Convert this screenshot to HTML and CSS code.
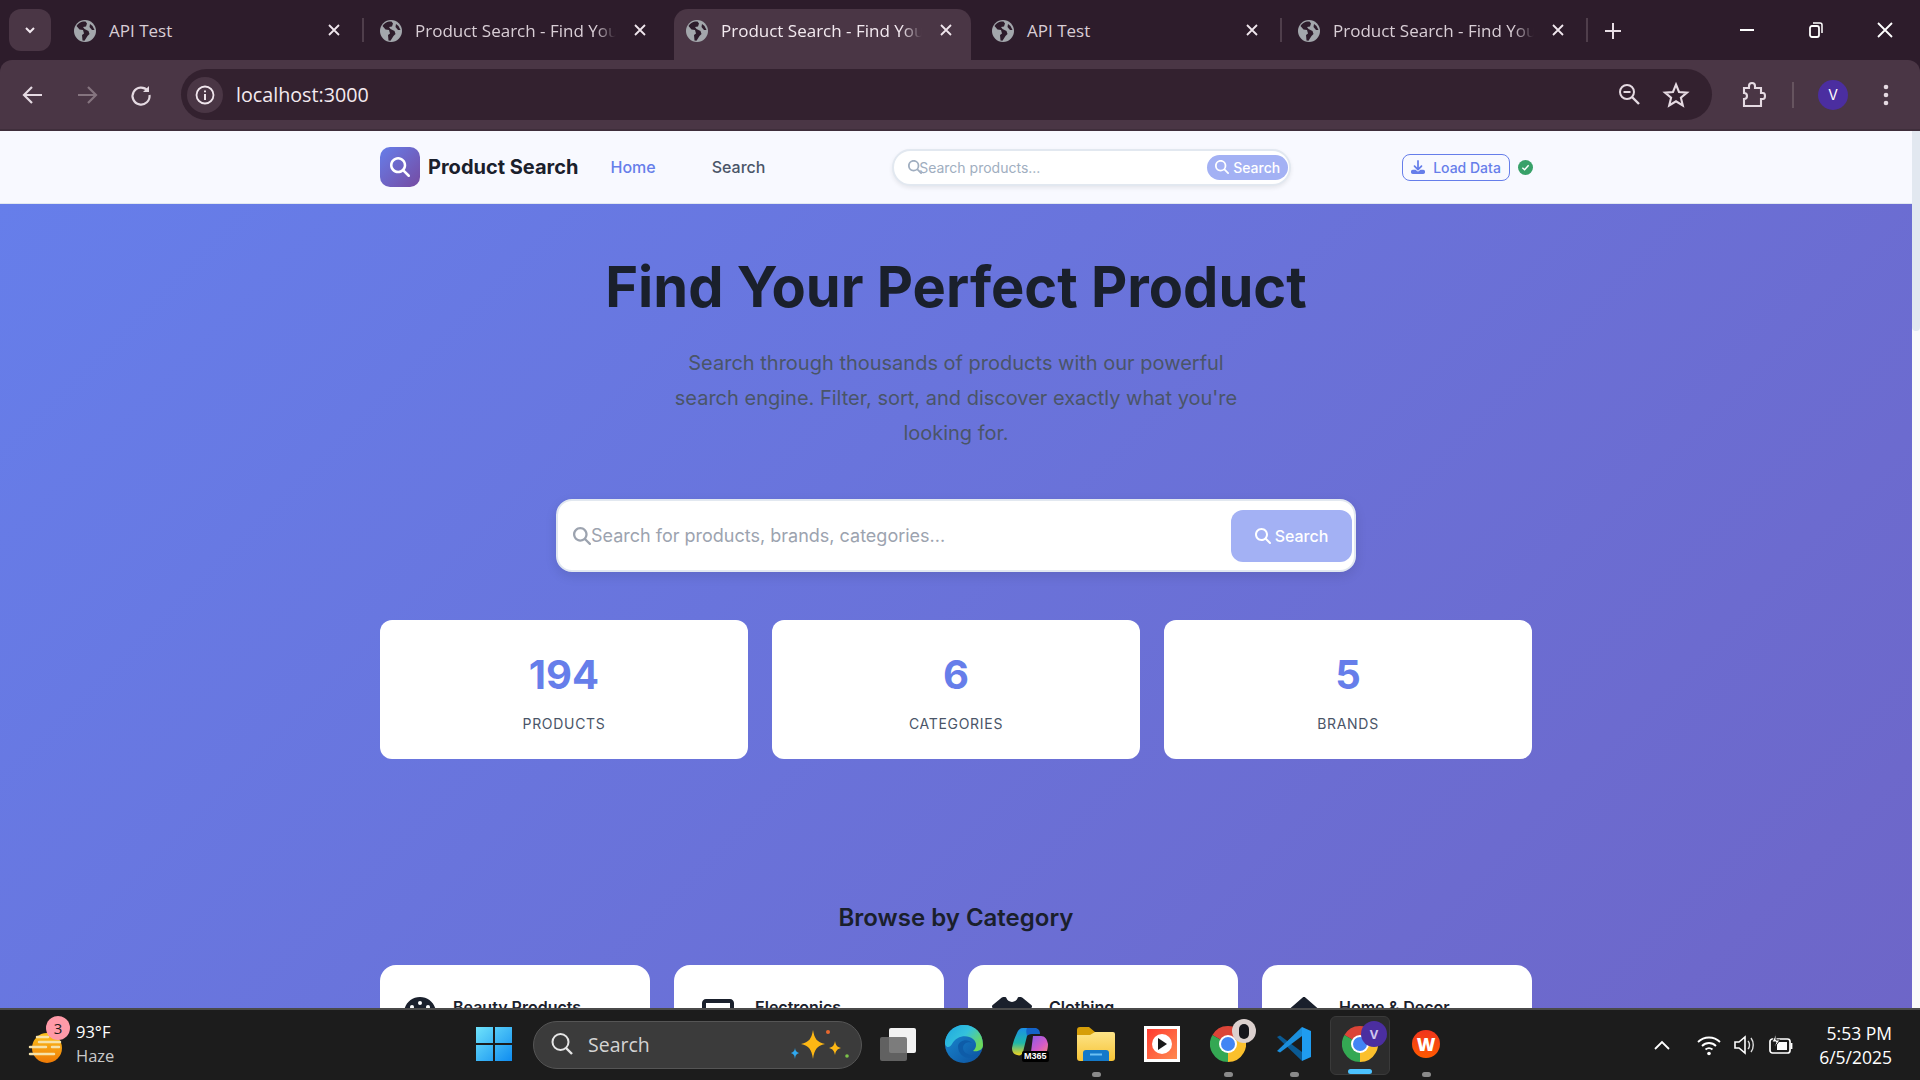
FILE: index.html
```html
<!DOCTYPE html>
<html lang="en">
<head>
<meta charset="UTF-8">
<meta name="viewport" content="width=device-width, initial-scale=1.0">
<title>Product Search - Find Your Perfect Product</title>
<link rel="stylesheet" href="styles.css">
</head>
<body>

<svg class="sprites" width="0" height="0" aria-hidden="true">
    <symbol id="i-search" viewBox="0 0 512 512"><path fill="currentColor" d="M416 208c0 45.9-14.9 88.3-40 122.7L502.6 457.4c12.5 12.5 12.5 32.8 0 45.3s-32.8 12.5-45.3 0L330.7 376c-34.4 25.2-76.8 40-122.7 40C93.1 416 0 322.9 0 208S93.1 0 208 0S416 93.1 416 208zM208 352a144 144 0 1 0 0-288 144 144 0 1 0 0 288z"/></symbol>
    <symbol id="i-download" viewBox="0 0 512 512"><path fill="currentColor" d="M288 32c0-17.7-14.3-32-32-32s-32 14.3-32 32V274.7l-73.4-73.4c-12.5-12.5-32.8-12.5-45.3 0s-12.5 32.8 0 45.3l128 128c12.5 12.5 32.8 12.5 45.3 0l128-128c12.5-12.5 12.5-32.8 0-45.3s-32.8-12.5-45.3 0L288 274.7V32zM64 352c-35.3 0-64 28.7-64 64v32c0 35.3 28.7 64 64 64H448c35.3 0 64-28.7 64-64V416c0-35.3-28.7-64-64-64H346.5l-45.3 45.3c-25 25-65.5 25-90.5 0L165.5 352H64z"/></symbol>
    <symbol id="i-globe" viewBox="0 0 22 22"><circle cx="11" cy="11" r="11" fill="#a3a7ac"/><path fill="#2d1c2b" d="M9 1.500 C6.500 2 4 3.500 2.500 6 L5.500 9.500 L9 10 L10 13.500 L8 15 L8.500 20.500 L10.500 20.800 L13.500 16 L15.500 14 L14.500 11 L10.500 9 L9 7 L12 6.500 L13 3.500 L11.500 1.500Z"/><path fill="#2d1c2b" d="M16 4 L18.500 6 L20.500 10 L18 10 L15.500 7Z"/></symbol>
    <symbol id="i-x" viewBox="0 0 14 14"><path d="M2 2 L12 12 M12 2 L2 12" stroke="currentColor" stroke-width="1.800" fill="none"/></symbol>
    <symbol id="i-chrome" viewBox="0 0 36 36"><path fill="#db4437" d="M18 18 L2.410 9 A18 18 0 0 1 33.590 9Z"/><path fill="#fbc02d" d="M18 18 L33.590 9 A18 18 0 0 1 18 36Z"/><path fill="#34a853" d="M18 18 L18 36 A18 18 0 0 1 2.410 9Z"/><circle cx="18" cy="18" r="9" fill="#fff"/><circle cx="18" cy="18" r="7" fill="#4285f4"/></symbol>
</svg>

<div class="tabstrip">
    <button class="tab-search" aria-label="Search tabs"><svg width="14" height="14" viewBox="0 0 14 14"><path d="M3 5 L7 9 L11 5" stroke="#f3e9f0" stroke-width="2" fill="none"/></svg></button>
    <div class="tab sep"><svg class="favicon"><use href="#i-globe"/></svg><span class="tab-title">API Test</span><svg class="tab-close"><use href="#i-x"/></svg></div>
    <div class="tab"><svg class="favicon"><use href="#i-globe"/></svg><span class="tab-title fade">Product Search - Find You</span><svg class="tab-close"><use href="#i-x"/></svg></div>
    <div class="tab active"><svg class="favicon"><use href="#i-globe"/></svg><span class="tab-title fade">Product Search - Find You</span><svg class="tab-close"><use href="#i-x"/></svg></div>
    <div class="tab sep"><svg class="favicon"><use href="#i-globe"/></svg><span class="tab-title">API Test</span><svg class="tab-close"><use href="#i-x"/></svg></div>
    <div class="tab sep"><svg class="favicon"><use href="#i-globe"/></svg><span class="tab-title fade">Product Search - Find You</span><svg class="tab-close"><use href="#i-x"/></svg></div>
    <svg class="new-tab" width="20" height="20" viewBox="0 0 20 20"><path d="M10 2 V18 M2 10 H18" stroke="#e8dde5" stroke-width="2"/></svg>
    <div class="window-controls">
        <svg width="16" height="16" viewBox="0 0 16 16"><path d="M1 8 H15" stroke="#fff" stroke-width="2"/></svg>
        <svg width="16" height="18" viewBox="0 0 16 18"><rect x="2" y="5" width="9" height="11" rx="2" stroke="#fff" stroke-width="1.800" fill="none"/><path d="M5 2 H12 Q14 2 14 4 V12" stroke="#fff" stroke-width="1.500" fill="none"/></svg>
        <svg width="18" height="18" viewBox="0 0 18 18"><path d="M2 2 L16 16 M16 2 L2 16" stroke="#fff" stroke-width="1.800"/></svg>
    </div>
</div>

<div class="toolbar">
    <svg class="tool" viewBox="0 0 36 36"><path d="M27 18 H9 M17 10 L9 18 L17 26" stroke="#e5dae2" stroke-width="2.200" fill="none"/></svg>
    <svg class="tool" viewBox="0 0 36 36"><path d="M9 18 H27 M19 10 L27 18 L19 26" stroke="#85747f" stroke-width="2.200" fill="none"/></svg>
    <svg class="tool" viewBox="0 0 36 36"><path d="M24.500 13.500 A8.500 8.500 0 1 0 26.500 18" stroke="#e5dae2" stroke-width="2.200" fill="none"/><path d="M26 9 V15 H20Z" fill="#e5dae2"/></svg>
    <div class="address">
        <span class="info-chip"><svg width="22" height="22" viewBox="0 0 22 22"><circle cx="11" cy="11" r="8.500" stroke="#f0e6ed" stroke-width="1.800" fill="none"/><path d="M11 10 V16 M11 6.500 V8.300" stroke="#f0e6ed" stroke-width="2"/></svg></span>
        <span class="url">localhost:3000</span>
        <svg class="tool" viewBox="0 0 36 36"><circle cx="16" cy="15" r="7" stroke="#e5dae2" stroke-width="2" fill="none"/><path d="M21 20 L28 27" stroke="#e5dae2" stroke-width="2.400"/><path d="M12.500 15 H19.500" stroke="#e5dae2" stroke-width="2"/></svg>
        <svg class="tool" viewBox="0 0 36 36"><path d="M18 7.500 L21 15 L29 15.600 L22.900 20.700 L24.800 28.500 L18 24.300 L11.200 28.500 L13.100 20.700 L7 15.600 L15 15Z" stroke="#e5dae2" stroke-width="2.100" fill="none"/></svg>
    </div>
    <svg class="tool" viewBox="0 0 36 36"><path d="M9 11 H14 V9 Q14 6 17 6 Q20 6 20 9 V11 H26 V16 H28 Q30 16 30 19 Q30 22 28 22 H26 V29 H9 V22 Q12 22 12 19 Q12 16 9 16Z" stroke="#e5dae2" stroke-width="2.100" fill="none"/></svg>
    <span class="tool-divider"></span>
    <span class="avatar">V</span>
    <svg class="tool tool-menu" viewBox="0 0 36 36"><circle cx="18" cy="10" r="2.300" fill="#e5dae2"/><circle cx="18" cy="18" r="2.300" fill="#e5dae2"/><circle cx="18" cy="26" r="2.300" fill="#e5dae2"/></svg>
</div>

<div class="viewport">
    <div class="page">
        <header class="site-header">
            <div class="brand-group">
                <span class="logo"><svg width="20" height="20"><use href="#i-search"/></svg></span>
                <span class="brand">Product Search</span>
                <nav class="nav">
                    <a class="nav-link current">Home</a>
                    <a class="nav-link">Search</a>
                </nav>
            </div>
            <form class="header-search">
                <svg class="header-search-icon" width="14" height="14"><use href="#i-search"/></svg>
                <input type="text" placeholder="Search products...">
                <button type="button" class="header-search-btn"><svg width="14" height="14"><use href="#i-search"/></svg>Search</button>
            </form>
            <div class="actions">
                <button class="load-btn"><svg width="14" height="14"><use href="#i-download"/></svg>Load Data</button>
                <span class="status-dot"><svg width="9" height="9" viewBox="0 0 10 10"><path d="M1.500 5.200 L4 7.500 L8.500 2.500" stroke="#fff" stroke-width="1.600" fill="none"/></svg></span>
            </div>
        </header>

        <main class="hero">
            <h1>Find Your Perfect Product</h1>
            <p class="lead">Search through thousands of products with our powerful search engine. Filter, sort, and discover exactly what you're looking for.</p>

            <form class="hero-search">
                <svg class="hero-search-icon" width="18" height="18"><use href="#i-search"/></svg>
                <input type="text" placeholder="Search for products, brands, categories...">
                <button type="button" class="hero-search-btn"><svg width="16" height="16"><use href="#i-search"/></svg>Search</button>
            </form>

            <section class="stats">
                <div class="stat"><div class="stat-num">194</div><div class="stat-label">Products</div></div>
                <div class="stat"><div class="stat-num">6</div><div class="stat-label">Categories</div></div>
                <div class="stat"><div class="stat-num">5</div><div class="stat-label">Brands</div></div>
            </section>

            <h2>Browse by Category</h2>
            <section class="categories">
                <div class="category">
                    <svg class="cat-icon" width="32" height="32" viewBox="0 0 512 512"><path d="M512 256c0 .9 0 1.800 0 2.700c-.4 36.500-33.600 61.300-70.100 61.300H344c-26.500 0-48 21.500-48 48c0 3.400 .4 6.700 1 9.900c2.100 10.200 6.500 20 10.800 29.900c6.100 13.800 12.100 27.500 12.100 42c0 31.800-21.600 60.700-53.400 62c-3.500 .1-7 .2-10.600 .2C114.600 512 0 397.400 0 256S114.600 0 256 0S512 114.600 512 256zM128 288a32 32 0 1 0 -64 0 32 32 0 1 0 64 0zm0-96a32 32 0 1 0 0-64 32 32 0 1 0 0 64zM288 96a32 32 0 1 0 -64 0 32 32 0 1 0 64 0zm96 96a32 32 0 1 0 0-64 32 32 0 1 0 0 64z"/></svg>
                    <span class="cat-name">Beauty Products</span>
                </div>
                <div class="category">
                    <svg class="cat-icon" width="40" height="32" viewBox="0 0 640 512"><path d="M128 32C92.700 32 64 60.700 64 96V352h64V96H512V352h64V96c0-35.300-28.700-64-64-64H128zM19.200 384C8.600 384 0 392.600 0 403.200C0 445.600 34.400 480 76.800 480H563.200c42.400 0 76.800-34.400 76.800-76.800c0-10.600-8.600-19.200-19.200-19.200H19.200z"/></svg>
                    <span class="cat-name">Electronics</span>
                </div>
                <div class="category">
                    <svg class="cat-icon" width="40" height="32" viewBox="0 0 640 512"><path d="M211.800 0c7.800 0 14.300 5.700 16.700 13.200C240.800 51.900 277.100 80 320 80s79.200-28.100 91.500-66.800C413.900 5.700 420.400 0 428.200 0h12.600c22.500 0 44.200 7.900 61.500 22.300L628.500 127.400c6.600 5.500 10.700 13.500 11.400 22.100s-2.100 17.100-7.800 23.600l-56 64c-11.400 13.100-31.200 14.600-44.600 3.500L480 197.700V448c0 35.300-28.700 64-64 64H224c-35.300 0-64-28.700-64-64V197.700l-51.500 42.900c-13.300 11.100-33.100 9.600-44.600-3.500l-56-64c-5.700-6.500-8.500-15-7.800-23.600s4.800-16.600 11.400-22.100L137.700 22.300C155 7.900 176.700 0 199.200 0h12.600z"/></svg>
                    <span class="cat-name">Clothing</span>
                </div>
                <div class="category">
                    <svg class="cat-icon" width="36" height="32" viewBox="0 0 576 512"><path d="M575.800 255.500c0 18-15 32.100-32 32.100h-32l.7 160.200c0 2.700-.2 5.400-.5 8.100V472c0 22.100-17.900 40-40 40H456c-1.100 0-2.200 0-3.300-.1c-1.400 .1-2.800 .1-4.200 .1H416 392c-22.100 0-40-17.900-40-40V448 384c0-17.700-14.300-32-32-32H256c-17.700 0-32 14.300-32 32v64 24c0 22.100-17.900 40-40 40H160 128.100c-1.500 0-3-.1-4.500-.2c-1.200 .1-2.400 .2-3.600 .2H104c-22.100 0-40-17.900-40-40V360c0-.9 0-1.900 .1-2.800V287.600H32c-18 0-32-14-32-32.100c0-9 3-17 10-24L266.400 8c7-7 15-8 22-8s15 2 21 7L564.800 231.500c8 7 12 15 11 24z"/></svg>
                    <span class="cat-name">Home &amp; Decor</span>
                </div>
            </section>
        </main>
    </div>
    <div class="scrollbar"><div class="scroll-thumb"></div></div>
</div>

<footer class="taskbar">
    <div class="weather">
        <span class="weather-icon">
            <svg width="38" height="36" viewBox="0 0 38 36">
                <defs><linearGradient id="sunGrad" x1="0" y1="0" x2="0" y2="1"><stop offset="0" stop-color="#fcc21b"/><stop offset="1" stop-color="#ef7a06"/></linearGradient></defs>
                <circle cx="19" cy="18" r="15" fill="url(#sunGrad)"/>
                <path d="M9 7 H20 M11 12 H32 M2 17 H18 M24 17 H31 M2 24 H26" stroke="#f6e2a8" stroke-width="2.500" stroke-linecap="round"/>
            </svg>
            <span class="badge">3</span>
        </span>
        <div class="weather-text"><div>93°F</div><div class="muted">Haze</div></div>
    </div>

    <div class="slot">
        <svg width="36" height="36" viewBox="0 0 36 36">
            <defs><linearGradient id="winGrad" x1="0" y1="0" x2="1" y2="1"><stop offset="0" stop-color="#6fe3fb"/><stop offset="1" stop-color="#0f8cf0"/></linearGradient></defs>
            <path fill="url(#winGrad)" d="M0 1 H17 V17 H0Z M19 1 H36 V17 H19Z M0 19 H17 V35 H0Z M19 19 H36 V35 H19Z"/>
        </svg>
    </div>

    <div class="task-search">
        <svg width="24" height="24" viewBox="0 0 24 24"><circle cx="10.500" cy="10" r="8" stroke="#e6e6e6" stroke-width="2" fill="none"/><path d="M16 16 L22 22" stroke="#e6e6e6" stroke-width="2.400"/></svg>
        <span>Search</span>
        <svg class="sparkles" width="60" height="36" viewBox="0 0 60 36">
            <path fill="#fdb714" d="M24 4 C25.500 13 28 16 36 18 C28 20 25.500 23 24 33 C22.500 23 20 20 12 18 C20 16 22.500 13 24 4Z"/>
            <path fill="#fdb714" d="M46 15 C46.800 19 48 21 52 22 C48 23 46.800 25 46 29 C45.200 25 44 23 40 22 C44 21 45.200 19 46 15Z"/>
            <path fill="#2fa9f0" d="M6 22 C6.400 25 7.500 26 10 27 C7.500 28 6.400 29 6 33 C5.600 29 4.500 28 2 27 C4.500 26 5.600 25 6 22Z"/>
            <circle cx="39" cy="6" r="2" fill="#e9682e"/>
            <circle cx="58" cy="30" r="1.800" fill="#7cc24a"/>
        </svg>
    </div>

    <div class="slot">
        <svg width="38" height="38" viewBox="0 0 38 38">
            <rect x="10" y="3" width="27" height="25" rx="2" fill="#f2f2f2"/>
            <rect x="1" y="12" width="27" height="24" rx="2" fill="#6b6b6b" fill-opacity=".88"/>
        </svg>
    </div>

    <div class="slot">
        <svg width="40" height="40" viewBox="0 0 40 40">
            <defs>
                <linearGradient id="edgeA" x1="0" y1="0" x2="1" y2=".6"><stop offset="0" stop-color="#1da6e0"/><stop offset=".55" stop-color="#34c2dc"/><stop offset="1" stop-color="#6cd85c"/></linearGradient>
                <linearGradient id="edgeB" x1="0" y1="0" x2="1" y2="1"><stop offset="0" stop-color="#1b8ed6"/><stop offset="1" stop-color="#0c4f9c"/></linearGradient>
            </defs>
            <circle cx="20" cy="20" r="19" fill="url(#edgeB)"/>
            <path fill="url(#edgeA)" d="M1 20 C1 9 10 1 20 1 C31 1 39 9 39 21 C39 26 34 28 29 27 C33 24 33 18 29 15 C23 10 12 12 8 20 C6 23 3 25 1 20Z"/>
            <path fill="#0e5ca8" d="M14 22 C15 16 24 14 28 19 C25 17 19 19 19 24 C19 29 26 33 34 30 C29 37 14 35 14 22Z"/>
        </svg>
    </div>

    <div class="slot">
        <span class="m365">
            <svg width="36" height="34" viewBox="0 0 36 34">
                <defs>
                    <linearGradient id="copA" x1="0" y1="0" x2="0" y2="1"><stop offset="0" stop-color="#1b8fe8"/><stop offset=".55" stop-color="#1fb8a8"/><stop offset="1" stop-color="#f3d21c"/></linearGradient>
                    <linearGradient id="copB" x1="0" y1="0" x2="1" y2="1"><stop offset="0" stop-color="#7a5cf0"/><stop offset=".6" stop-color="#d45bc8"/><stop offset="1" stop-color="#f78a6a"/></linearGradient>
                </defs>
                <path fill="url(#copA)" d="M11 2 H22 C18 3 16 6 15 10 L11 26 C10 29 8 30 5 29 C1 28 0 25 0 22 C1 16 3 11 5 7 C6 4 8 2 11 2Z"/>
                <path fill="#1463c8" d="M15 2 H24 C27 3 28 5 28 8 L20 8 C17 8 16 9 15 10 C14 6 14 4 15 2Z"/>
                <path fill="url(#copB)" d="M21 10 H29 C33 10 35 13 36 18 C36 24 34 29 30 30 H14 C17 30 18 28 19 26Z"/>
            </svg>
            <span class="m365-tag">M365</span>
        </span>
    </div>

    <div class="slot running">
        <svg width="38" height="34" viewBox="0 0 38 34">
            <defs><linearGradient id="folderGrad" x1="0" y1="0" x2="0" y2="1"><stop offset="0" stop-color="#fde488"/><stop offset="1" stop-color="#f7c436"/></linearGradient></defs>
            <path fill="#d69e08" d="M0 3 Q0 0 3 0 H12 L18 5 H36 V10 H0Z"/>
            <path fill="url(#folderGrad)" d="M0 8 L13 8 L18 5 H36 Q38 5 38 7 V31 Q38 34 35 34 H3 Q0 34 0 31Z"/>
            <path fill="#1479c9" d="M6 34 V26 Q6 23 9 23 H29 Q32 23 32 26 V34Z"/>
            <path d="M13 27.500 H25" stroke="#6cc0f2" stroke-width="2"/>
        </svg>
    </div>

    <div class="slot">
        <span class="media-icon"><span class="media-play"><svg width="10" height="12" viewBox="0 0 10 12"><path d="M1 0 L10 6 L1 12Z" fill="#1a1a1a"/></svg></span></span>
    </div>

    <div class="slot running">
        <svg width="36" height="36"><use href="#i-chrome"/></svg>
        <span class="photo-badge"><span class="photo-figure"></span></span>
    </div>

    <div class="slot running">
        <svg width="36" height="36" viewBox="0 0 36 36">
            <path fill="#0a5a94" d="M1 11 L4 9.500 L26 26 V35 Z"/>
            <path fill="#1b8fdd" d="M1 25 L4 26.500 L26 10 V1Z"/>
            <path fill="#1f9cf0" d="M26 1 L35 5 V31 L26 35Z"/>
        </svg>
    </div>

    <div class="slot active-app">
        <svg width="36" height="36"><use href="#i-chrome"/></svg>
        <span class="profile-badge">V</span>
    </div>

    <div class="slot running">
        <span class="wps-icon">W</span>
    </div>

    <div class="tray">
        <svg width="18" height="12" viewBox="0 0 18 12"><path d="M2 10 L9 3 L16 10" stroke="#fff" stroke-width="1.800" fill="none"/></svg>
        <svg class="wifi" width="24" height="24" viewBox="0 0 24 24"><path d="M1 9 C7 3 17 3 23 9 M5 13 C9 9 15 9 19 13 M8.500 16.500 C10.500 15 13.500 15 15.500 16.500" stroke="#fff" stroke-width="1.800" fill="none"/><circle cx="12" cy="20.500" r="1.800" fill="#fff"/></svg>
        <svg class="volume" width="24" height="24" viewBox="0 0 24 24"><path d="M2 9 H6 L12 4 V20 L6 15 H2Z" stroke="#fff" stroke-width="1.600" fill="none"/><path d="M15 8 C17 10 17 14 15 16 M18 5 C21 9 21 15 18 19" stroke="#ddd" stroke-width="1.400" fill="none"/></svg>
        <svg class="battery" width="26" height="24" viewBox="0 0 26 24"><rect x="2" y="6" width="20" height="14" rx="2.500" stroke="#fff" stroke-width="1.700" fill="none"/><rect x="9" y="9" width="10" height="8" fill="#fff"/><path d="M23.500 10 V16" stroke="#fff" stroke-width="1.800"/><path d="M8 1 L4 9 H8 L6 15 L12 7 H8Z" fill="#fff" stroke="#1c1c1c"/></svg>
        <div class="clock"><div>5:53 PM</div><div>6/5/2025</div></div>
    </div>
</footer>

</body>
</html>
```

FILE: styles.css
```css
* {
    box-sizing: border-box;
}

html,
body {
    height: 100%;
}

body {
    margin: 0;
    overflow: hidden;
    display: flex;
    flex-direction: column;
    background-color: #2d1c2b;
    font-family: Inter, "Liberation Sans", sans-serif;
}

.sprites {
    position: absolute;
}

button {
    font-family: inherit;
    border: none;
    cursor: pointer;
}

/* browser tabs */
.tabstrip {
    height: 60px;
    flex-shrink: 0;
    display: flex;
    align-items: flex-start;
    padding-left: 9px;
    background-color: #2d1c2b;
    font-family: "Open Sans", sans-serif;
}

.tab-search {
    width: 42px;
    height: 42px;
    margin: 9px 8px 0 0;
    border-radius: 12px;
    background-color: #4a3645;
    display: flex;
    align-items: center;
    justify-content: center;
}

.tab {
    position: relative;
    width: 306px;
    height: 60px;
    padding: 20px 24px 0 15px;
    display: flex;
    gap: 13px;
    color: #d9ced6;
    font-size: 17px;
    line-height: 22px;
}

.tab.sep::after {
    content: "";
    position: absolute;
    right: 1px;
    top: 18px;
    width: 2px;
    height: 24px;
    background-color: #4f3e4b;
}

.tab.active {
    color: #f3eaf0;
}

.tab.active::before {
    content: "";
    position: absolute;
    z-index: 0;
    left: 3px;
    right: 6px;
    top: 9px;
    bottom: 0;
    background-color: #4a3645;
    border-radius: 14px 14px 0 0;
}

.favicon {
    position: relative;
    width: 22px;
    height: 22px;
    flex-shrink: 0;
}

.tab-title {
    position: relative;
    flex: 1;
    min-width: 0;
    white-space: nowrap;
}

.tab-title.fade {
    -webkit-mask-image: linear-gradient(to right, #000 88%, transparent 98%);
    mask-image: linear-gradient(to right, #000 88%, transparent 98%);
}

.tab-close {
    position: relative;
    width: 14px;
    height: 14px;
    flex-shrink: 0;
    margin-top: 3px;
    color: #f0e6ed;
}

.new-tab {
    margin: 21px 0 0 14px;
}

.window-controls {
    margin-left: auto;
    display: flex;
    align-items: center;
    gap: 53px;
    padding: 21px 26px 0 0;
}

.window-controls svg:last-child {
    margin-left: -1px;
}

/* address bar row */
.toolbar {
    height: 71px;
    flex-shrink: 0;
    display: flex;
    align-items: center;
    gap: 18px;
    padding: 0 16px 0 15px;
    background-color: #4a3645;
    border-bottom: 2px solid #3f2e3b;
    border-radius: 12px 12px 0 0;
}

.tool {
    width: 36px;
    height: 36px;
    flex-shrink: 0;
}

.address {
    flex: 1;
    height: 51px;
    margin: 0 5px 0 4px;
    padding: 0 18px 0 6px;
    display: flex;
    align-items: center;
    gap: 11px;
    border-radius: 26px;
    background-color: #33212f;
    font-family: "Open Sans", sans-serif;
}

.info-chip {
    width: 36px;
    height: 36px;
    margin-right: 2px;
    border-radius: 50%;
    background-color: #4a3645;
    display: flex;
    align-items: center;
    justify-content: center;
}

.url {
    flex: 1;
    color: #f3eaf0;
    font-size: 19.700px;
}

.tool-divider {
    width: 2px;
    height: 26px;
    margin-left: 3px;
    background-color: #66545f;
}

.avatar {
    width: 30px;
    height: 30px;
    flex-shrink: 0;
    margin-left: 6px;
    border-radius: 50%;
    background-color: #4b2ea0;
    color: #fff;
    font-size: 14px;
    display: flex;
    align-items: center;
    justify-content: center;
}

.tool-menu {
    margin-left: 2px;
}

/* page */
.viewport {
    flex: 1;
    min-height: 0;
    display: flex;
    overflow: hidden;
    background-color: #fafafa;
}

.page {
    flex: 1;
    min-width: 0;
}

.scrollbar {
    width: 8px;
    flex-shrink: 0;
}

.scroll-thumb {
    height: 200px;
    background-color: #e2e8f0;
    border-radius: 0 0 4px 4px;
}

.site-header {
    height: 73px;
    padding: 0 379px 0 380px;
    display: flex;
    align-items: center;
    justify-content: space-between;
    background-color: #f8f9ff;
    border-bottom: 1px solid #e2e8f0;
}

.brand-group {
    display: flex;
    align-items: center;
}

.logo {
    width: 40px;
    height: 40px;
    margin-right: 8px;
    border-radius: 10px;
    background: linear-gradient(135deg, #667eea, #764ba2);
    color: #fff;
    display: flex;
    align-items: center;
    justify-content: center;
}

.brand {
    color: #1a202c;
    font-size: 20px;
    font-weight: 700;
}

.nav {
    display: flex;
    gap: 24px;
    margin-left: 16px;
}

.nav-link {
    padding: 8px 16px;
    color: #4a5568;
    font-size: 16px;
    font-weight: 500;
}

.nav-link.current {
    color: #667eea;
}

.header-search {
    width: 399px;
    height: 37px;
    padding: 0 1px 0 14px;
    display: flex;
    align-items: center;
    border: 2px solid #e2e8f0;
    border-radius: 24px;
    background-color: #fff;
    box-shadow: 0 2px 4px rgba(0, 0, 0, 0.08);
}

.header-search-icon {
    flex-shrink: 0;
    color: #a0aec0;
    margin-right: -3px;
}

.header-search input {
    flex: 1;
    min-width: 0;
    padding: 0;
    border: none;
    outline: none;
    background: none;
    font-family: inherit;
    font-size: 14px;
}

.header-search input::placeholder {
    color: #a0aec0;
}

.header-search-btn {
    width: 81px;
    height: 25px;
    padding: 0;
    display: flex;
    align-items: center;
    justify-content: center;
    gap: 4px;
    border-radius: 20px;
    background-color: #a3b1f4;
    color: #fff;
    font-size: 14px;
    font-weight: 500;
}

.actions {
    display: flex;
    align-items: center;
    gap: 8px;
}

.load-btn {
    width: 108px;
    height: 27px;
    display: flex;
    align-items: center;
    justify-content: center;
    gap: 8px;
    border: 1px solid #667eea;
    border-radius: 8px;
    background: none;
    color: #667eea;
    font-size: 14px;
    font-weight: 500;
}

.status-dot {
    width: 15px;
    height: 15px;
    border-radius: 50%;
    background-color: #38a169;
    display: flex;
    align-items: center;
    justify-content: center;
}

/* the real page runs on for a long way, so only the start of the gradient shows */
.hero {
    height: 3800px;
    padding: 50px 380px 0;
    display: flex;
    flex-direction: column;
    align-items: center;
    background: linear-gradient(135deg, #667eea 0%, #764ba2 100%);
}

.hero h1 {
    margin: 0 0 25px;
    color: #1a202c;
    font-size: 56px;
    line-height: 67px;
    font-weight: 700;
}

.lead {
    max-width: 600px;
    margin: 0 0 48px;
    color: #4a5568;
    font-size: 20px;
    line-height: 35px;
    text-align: center;
}

.hero-search {
    width: 800px;
    height: 73px;
    flex-shrink: 0;
    padding: 0 2px 0 15px;
    display: flex;
    align-items: center;
    border: 2px solid #e2e8f0;
    border-radius: 16px;
    background-color: #fff;
    box-shadow: 0 4px 12px rgba(0, 0, 0, 0.1);
}

.hero-search-icon {
    flex-shrink: 0;
    color: #9ca3af;
}

.hero-search input {
    flex: 1;
    min-width: 0;
    padding: 0;
    border: none;
    outline: none;
    background: none;
    font-family: inherit;
    font-size: 18px;
}

.hero-search input::placeholder {
    color: #9ca3af;
}

.hero-search-btn {
    width: 121px;
    height: 52px;
    display: flex;
    align-items: center;
    justify-content: center;
    gap: 4px;
    border-radius: 12px;
    background-color: #a3b1f4;
    color: #fff;
    font-size: 16px;
    font-weight: 500;
}

.stats {
    width: 100%;
    margin-top: 48px;
    display: grid;
    grid-template-columns: repeat(3, 1fr);
    gap: 24px;
}

.stat {
    height: 139px;
    padding: 31px 24px 24px;
    border-radius: 12px;
    background-color: #fff;
    text-align: center;
}

.stat-num {
    color: #667eea;
    font-size: 40px;
    line-height: 48px;
    font-weight: 700;
}

.stat-label {
    margin-top: 14px;
    color: #4a5568;
    font-size: 14px;
    line-height: 21px;
    letter-spacing: 0.7px;
    text-transform: uppercase;
}

.hero h2 {
    margin: 140px 0 29px;
    color: #1a202c;
    font-size: 24px;
    line-height: 37px;
    font-weight: 600;
}

.categories {
    width: 100%;
    display: grid;
    grid-template-columns: repeat(4, 1fr);
    gap: 24px;
}

.category {
    height: 120px;
    padding: 30px 24px;
    display: flex;
    gap: 17px;
    border-radius: 16px;
    background-color: #fff;
}

.cat-icon {
    flex-shrink: 0;
    margin-top: 2px;
    fill: #1a202c;
}

.cat-name {
    color: #1a202c;
    font-size: 16px;
    line-height: 24px;
    font-weight: 600;
}

/* windows taskbar */
.taskbar {
    height: 72px;
    flex-shrink: 0;
    display: flex;
    align-items: center;
    padding-right: 28px;
    background-color: #1c1c1c;
    border-top: 2px solid #4a4a4a;
    color: #fff;
    font-family: "Open Sans", sans-serif;
}

.weather {
    width: 461px;
    padding-left: 28px;
    display: flex;
    gap: 10px;
    align-items: center;
}

.weather-icon {
    position: relative;
    width: 38px;
    height: 36px;
    margin-top: 6px;
}

.badge {
    position: absolute;
    right: -4px;
    top: -14px;
    width: 24px;
    height: 24px;
    border-radius: 50%;
    background-color: #ff9aa8;
    color: #1c1c1c;
    font-size: 15px;
    line-height: 24px;
    text-align: center;
}

.weather-text {
    padding-bottom: 2px;
    font-size: 16.500px;
    line-height: 24px;
}

.muted {
    color: #c8c8c8;
}

.slot {
    position: relative;
    width: 66px;
    height: 58px;
    flex-shrink: 0;
    display: flex;
    align-items: center;
    justify-content: center;
    padding-bottom: 2px;
}

.slot.running::after {
    content: "";
    position: absolute;
    left: 29px;
    bottom: -3px;
    width: 9px;
    height: 5px;
    border-radius: 3px;
    background-color: #8a8a8a;
}

.task-search {
    width: 329px;
    height: 48px;
    margin: 0 3px 0 6px;
    padding: 0 12px 2px 16px;
    display: flex;
    align-items: center;
    gap: 14px;
    border: 1px solid #555;
    border-radius: 24px;
    background-color: #3b3b3b;
    color: #d4d4d4;
    font-size: 19.500px;
}

.sparkles {
    margin-left: auto;
}

.m365 {
    position: relative;
    display: block;
    width: 36px;
    height: 36px;
}

.m365-tag {
    position: absolute;
    left: 10px;
    top: 25px;
    padding: 0 2px;
    border-radius: 2px;
    background-color: #000;
    color: #fff;
    font-size: 9px;
    line-height: 11px;
    font-weight: 700;
    font-family: "Liberation Sans", sans-serif;
}

.media-icon {
    width: 36px;
    height: 36px;
    border: 3px solid #fff;
    background: linear-gradient(135deg, #ff3b30, #ff8a50);
    display: flex;
    align-items: center;
    justify-content: center;
}

.media-play {
    width: 20px;
    height: 20px;
    border-radius: 50%;
    background-color: #fff;
    display: flex;
    align-items: center;
    justify-content: center;
}

.photo-badge {
    position: absolute;
    left: 37px;
    top: 3px;
    width: 24px;
    height: 24px;
    border-radius: 50%;
    background-color: #dbd0ce;
    display: flex;
    align-items: center;
    justify-content: center;
}

.photo-figure {
    width: 10px;
    height: 15px;
    border-radius: 5px;
    background-color: #15151b;
}

.active-app {
    width: 60px;
    height: 59px;
    margin: 0 3px;
    border: 1px solid #3a3a3a;
    border-radius: 6px;
    background-color: #2c2c2c;
}

.active-app::after {
    content: "";
    position: absolute;
    left: 17px;
    bottom: 0;
    width: 24px;
    height: 5px;
    border-radius: 3px;
    background-color: #4cc2ff;
}

.profile-badge {
    position: absolute;
    left: 30px;
    top: 4px;
    width: 26px;
    height: 26px;
    border-radius: 50%;
    background-color: #4b2ea0;
    color: #cfc5ee;
    font-size: 13px;
    line-height: 26px;
    font-weight: 700;
    text-align: center;
}

.wps-icon {
    width: 28px;
    height: 28px;
    border-radius: 50%;
    background: linear-gradient(180deg, #f0341c, #ff5a00);
    color: #fff;
    font-size: 18px;
    line-height: 28px;
    font-weight: 800;
    text-align: center;
}

.tray {
    margin-left: auto;
    display: flex;
    align-items: center;
}

.wifi {
    margin-left: 26px;
}

.volume {
    margin-left: 12px;
}

.battery {
    margin-left: 11px;
}

.clock {
    margin-left: 25px;
    font-size: 17.500px;
    line-height: 24px;
    text-align: right;
}
```
